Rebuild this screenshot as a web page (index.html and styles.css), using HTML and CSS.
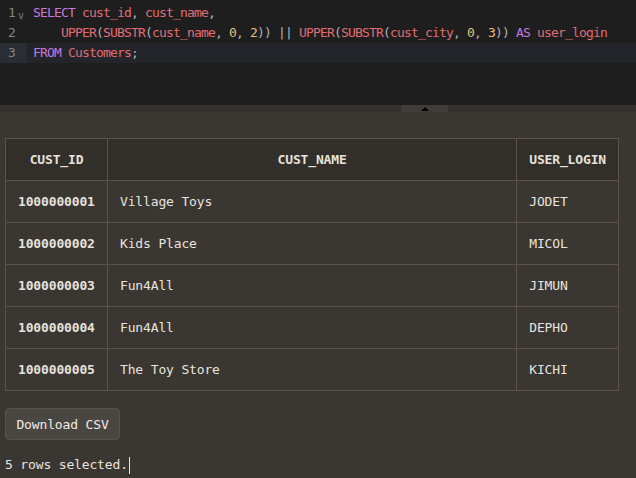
FILE: index.html
```html
<!DOCTYPE html>
<html>
<head>
<meta charset="utf-8">
<link rel="stylesheet" href="styles.css">
</head>
<body>
<div class="editor">
  <div class="line">
    <div class="gutter"><span class="num">1</span><span class="fold">v</span></div>
    <div class="code"><span class="kw">SELECT</span> <span class="id">cust_id</span><span class="p">,</span> <span class="id">cust_name</span><span class="p">,</span></div>
  </div>
  <div class="line">
    <div class="gutter"><span class="num">2</span><span class="fold"></span></div>
    <div class="code">    <span class="id">UPPER</span><span class="p">(</span><span class="id">SUBSTR</span><span class="p">(</span><span class="id">cust_name</span><span class="p">,</span> <span class="n">0</span><span class="p">,</span> <span class="n">2</span><span class="p">))</span> <span class="p">||</span> <span class="id">UPPER</span><span class="p">(</span><span class="id">SUBSTR</span><span class="p">(</span><span class="id">cust_city</span><span class="p">,</span> <span class="n">0</span><span class="p">,</span> <span class="n">3</span><span class="p">))</span> <span class="kw">AS</span> <span class="id">user_login</span></div>
  </div>
  <div class="line active">
    <div class="gutter"><span class="num">3</span><span class="fold"></span></div>
    <div class="code"><span class="kw">FROM</span> <span class="id">Customers</span><span class="p">;</span></div>
  </div>
</div>
<div class="resizer"><div class="handle"><span class="tri"></span></div></div>
<div class="results">
  <table class="grid">
    <thead>
      <tr><th class="c1">CUST_ID</th><th>CUST_NAME</th><th class="c3">USER_LOGIN</th></tr>
    </thead>
    <tbody>
      <tr><td class="idc">1000000001</td><td>Village Toys</td><td>JODET</td></tr>
      <tr><td class="idc">1000000002</td><td>Kids Place</td><td>MICOL</td></tr>
      <tr><td class="idc">1000000003</td><td>Fun4All</td><td>JIMUN</td></tr>
      <tr><td class="idc">1000000004</td><td>Fun4All</td><td>DEPHO</td></tr>
      <tr><td class="idc">1000000005</td><td>The Toy Store</td><td>KICHI</td></tr>
    </tbody>
  </table>
  <button class="btn">Download CSV</button>
  <div class="status">5 rows selected.<span class="caret"></span></div>
</div>
</body>
</html>
```
FILE: styles.css
```css
html, body {
  margin: 0;
  padding: 0;
}
body {
  background: #3a3632;
  width: 636px;
  height: 478px;
  overflow: hidden;
}
.editor {
  height: 105px;
  background: #1e1e1e;
  padding-top: 3px;
  box-sizing: border-box;
  font-family: "DejaVu Sans Mono", monospace;
  font-size: 13px;
  letter-spacing: -0.83px;
}
.line {
  display: flex;
  height: 20px;
  line-height: 20px;
}
.gutter {
  width: 27px;
  display: flex;
  color: #858585;
  flex: none;
}
.num {
  width: 15px;
  text-align: right;
}
.fold {
  width: 12px;
  font-size: 10px;
  text-align: center;
  line-height: 26px;
  color: #7a7a7a;
  letter-spacing: 0;
}
.code {
  padding-left: 6px;
  white-space: pre;
  flex: 1;
}
.active {
  background: #23252a;
}
.active .gutter {
  background: #2a2d33;
}
.kw { color: #c678dd; }
.id { color: #e06c75; }
.n { color: #e5c07b; }
.p { color: #abb2bf; }
.resizer {
  height: 7px;
  background: #34312d;
  display: flex;
  justify-content: center;
  padding-left: 213px;
  box-sizing: border-box;
}
.handle {
  width: 47px;
  height: 7px;
  background: #403d39;
  display: flex;
  justify-content: center;
  align-items: center;
}
.tri {
  width: 0;
  height: 0;
  border-left: 4px solid transparent;
  border-right: 4px solid transparent;
  border-bottom: 4px solid #000;
}
.results {
  padding: 26px 0 0 5px;
  font-family: "DejaVu Sans Mono", monospace;
  font-size: 13px;
  letter-spacing: -0.15px;
  color: #e8e4df;
}
.grid {
  width: 614px;
  border-collapse: collapse;
}
.grid th, .grid td {
  border: 1px solid #58534d;
  height: 42px;
  padding: 0 12px;
  box-sizing: border-box;
}
.grid th {
  background: #322e2a;
  font-weight: bold;
  text-align: center;
  color: #e6e2dc;
}
.grid td {
  text-align: left;
}
.grid .c1 { width: 102px; }
.grid .c3 { width: 101px; text-align: left; }
.grid td.idc { font-weight: bold; color: #e6e2dc; }
.btn {
  margin-top: 17px;
  display: block;
  width: 115px;
  height: 32px;
  background: #4a4642;
  border: 1px solid #57534e;
  border-radius: 4px;
  color: #f0ece7;
  font-family: "DejaVu Sans Mono", monospace;
  font-size: 13px;
  letter-spacing: -0.15px;
  padding: 0;
}
.status {
  margin-top: 16px;
  height: 18px;
  line-height: 18px;
  display: flex;
  align-items: center;
}
.caret {
  display: inline-block;
  width: 1px;
  height: 17px;
  background: #e8e4df;
  margin-left: 1px;
}
```
